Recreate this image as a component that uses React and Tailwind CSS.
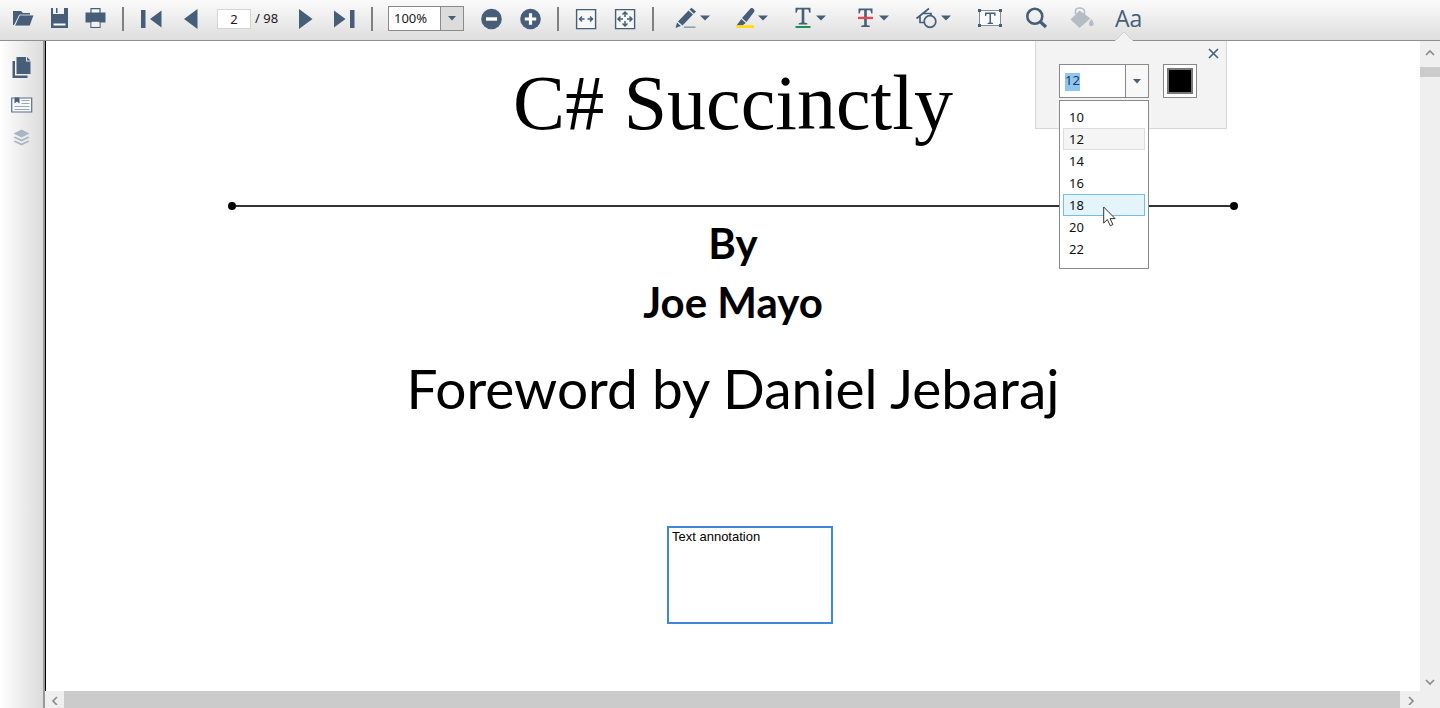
import React, { useState } from "react";

const INK = "#465e78";

function Icon({ w = 24, h = 24, children }) {
  return (
    <svg width={w} height={h} viewBox={`0 0 ${w} ${h}`} fill={INK} aria-hidden="true" className="block shrink-0">
      {children}
    </svg>
  );
}

function ToolButton({ label, children, disabled }) {
  return (
    <button type="button" aria-label={label} disabled={disabled} className="flex h-6 shrink-0 items-center">
      {children}
    </button>
  );
}

function DropButton({ label, children }) {
  return (
    <button type="button" aria-label={label} className="flex h-6 w-9 shrink-0 items-center justify-between">
      <Icon>{children}</Icon>
      <Icon w={10} h={6}>
        <path d="M0 .5h10L5 5.5z" />
      </Icon>
    </button>
  );
}

function Separator() {
  return <div className="h-6 w-0.5 shrink-0 bg-[#808080]" />;
}

const SIZES = [10, 12, 14, 16, 18, 20, 22];

function FontPanel() {
  const [size, setSize] = useState("12");
  return (
    <section
      aria-label="Text properties"
      className="absolute -left-20 top-[35px] z-20 h-[88px] w-48 border border-t-0 border-[#d6d6d6] bg-[#f3f3f3]"
    >
      <svg width="20" height="11" viewBox="0 0 20 11" className="absolute -top-2.5 left-[78px]" aria-hidden="true">
        <path d="M0 11 10 1l10 10z" fill="#f3f3f3" />
        <path d="M1 10 10 1l9 9" fill="none" stroke="#d0d0d0" />
      </svg>
      <div className="flex justify-end px-[7px] pt-[7px]">
        <button type="button" aria-label="Close" className="block">
          <svg width="11" height="11" viewBox="0 0 11 11" stroke={INK} strokeWidth="1.6" fill="none">
            <path d="M1 1l9 9M10 1l-9 9" />
          </svg>
        </button>
      </div>
      <div className="mt-[5px] flex items-start gap-3.5 pl-[23px]">
        <div className="relative w-[90px]">
          <div className="flex h-[34px] border border-[#8a8a8a] bg-white">
            <div className="relative flex min-w-0 flex-1 items-center pl-[5px]">
              <span className="absolute left-[5px] top-2 h-[18px] w-[15px] bg-[#8fc5f0]" />
              <input
                aria-label="Font size"
                value={size}
                onChange={(e) => setSize(e.target.value)}
                className="relative w-full bg-transparent font-['Noto_Sans',sans-serif] text-[13px] text-[#1c3a5a] outline-none"
              />
            </div>
            <button
              type="button"
              aria-label="Show sizes"
              className="flex w-[23px] items-center justify-center border-l border-[#8a8a8a] bg-[#f8f8f8]"
            >
              <Icon w={8} h={5}>
                <path d="M0 0h8L4 4.5z" />
              </Icon>
            </button>
          </div>
          <ul
            role="listbox"
            aria-label="Font sizes"
            className="absolute left-0 top-9 w-full border border-[#8a8a8a] bg-white px-[3px] pb-2 pt-[5px]"
          >
            {SIZES.map((n) => (
              <li
                key={n}
                role="option"
                aria-selected={n === 12}
                className={
                  "flex h-[22px] items-center border pl-[5px] font-['Noto_Sans',sans-serif] text-[13px] leading-5 text-[#111] " +
                  (n === 12
                    ? "border-[#dcdcdc] bg-[#f5f5f5]"
                    : n === 18
                      ? "border-[#70c0e7] bg-[#e5f3fb]"
                      : "border-transparent")
                }
              >
                {n}
              </li>
            ))}
          </ul>
          <svg width="13" height="21" viewBox="0 0 13 21" className="absolute left-11 top-[142px]" aria-hidden="true">
            <path d="M.7 1v16l3.7-3.4 2.9 6.2 2.6-1.2-2.8-6h5z" fill="#fff" stroke="#333" />
          </svg>
        </div>
        <button type="button" aria-label="Text color" className="h-[34px] w-[34px] border border-[#8a8a8a] bg-white p-[3px]">
          <span className="block h-full w-full border-2 border-[#777] bg-black" />
        </button>
      </div>
    </section>
  );
}

function Toolbar() {
  return (
    <header
      role="toolbar"
      className="relative z-10 flex h-[41px] shrink-0 items-start border-b border-[#8f8f8f] bg-linear-to-b from-[#fbfbfb] to-[#dedede] pl-[11px] pt-1.5"
    >
      <div className="flex shrink-0 items-center gap-3">
        <ToolButton label="Open">
          <Icon>
            <path d="M2 19V5h8l2 2h7v3H8L3 19z" />
            <path d="M8.5 9H23l-4 11H3.500z" stroke="#f5f5f5" strokeWidth=".8" />
          </Icon>
        </ToolButton>
        <ToolButton label="Save">
          <Icon>
            <path d="M4 2h2v6h11V2h4v20H4z" />
            <path d="M9 2h1.500v5H9z" />
            <path d="M6.500 17.500h12v2h-12z" fill="#fff" />
          </Icon>
        </ToolButton>
        <ToolButton label="Print">
          <Icon>
            <path d="M8 2.600h9v5H8zM8 16h9v5.400H8z" fill="#f8f8f8" stroke={INK} strokeWidth="1.200" />
            <path d="M2.500 6.500h20v10h-20z" />
            <path d="M8.600 15.800h7.800v5H8.600z" fill="#f2f2f2" />
          </Icon>
        </ToolButton>
      </div>
      <div className="ml-[15px] flex shrink-0 items-center gap-[15px]">
        <Separator />
        <ToolButton label="First page">
          <Icon>
            <path d="M2 3h4.500v18H2zM22.500 3.500v17L11 12z" />
          </Icon>
        </ToolButton>
        <ToolButton label="Previous page">
          <Icon>
            <path d="M19.500 2v20L6 12z" />
          </Icon>
        </ToolButton>
        <div className="flex items-center gap-1 font-['Noto_Sans',sans-serif] text-[13px] text-[#1a1a1a]">
          <input
            aria-label="Page number"
            defaultValue="2"
            className="h-5 w-[34px] border border-[#d4d4d4] bg-white text-center outline-none"
          />
          <span className="w-[23px] whitespace-nowrap">/ 98</span>
        </div>
        <ToolButton label="Next page">
          <Icon>
            <path d="M6 2v20l13.500-10z" />
          </Icon>
        </ToolButton>
        <ToolButton label="Last page">
          <Icon>
            <path d="M2 3.500v17L13.500 12zM18 3h4.500v18H18z" />
          </Icon>
        </ToolButton>
        <Separator />
        <div className="flex h-[25px] w-[76px] border border-[#8a8a8a] bg-white">
          <input
            aria-label="Zoom"
            defaultValue="100%"
            className="min-w-0 flex-1 bg-white pl-[5px] font-['Noto_Sans',sans-serif] text-[13px] text-[#1a1a1a] outline-none"
          />
          <button
            type="button"
            aria-label="Zoom levels"
            className="flex w-[23px] items-center justify-center border-l border-[#8a8a8a] bg-[#dcdcdc]"
          >
            <Icon w={8} h={5}>
              <path d="M0 0h8L4 4.500z" />
            </Icon>
          </button>
        </div>
        <ToolButton label="Zoom out">
          <Icon>
            <circle cx="12.500" cy="12" r="10.300" />
            <path d="M7 10.300h11v3.400H7z" fill="#fff" />
          </Icon>
        </ToolButton>
        <ToolButton label="Zoom in">
          <Icon>
            <circle cx="12.500" cy="12" r="10.300" />
            <path d="M6.800 10.400h4.100V6.300h3.200v4.100h4.100v3.200h-4.100v4.100h-3.200v-4.100H6.800z" fill="#fff" />
          </Icon>
        </ToolButton>
        <Separator />
        <ToolButton label="Fit width">
          <Icon>
            <path d="M2.600 2.600h19v19h-19z" fill="#f7f7f7" stroke={INK} strokeWidth="1.400" />
            <path d="M10.500 12H5.500M8 9.500 5.500 12 8 14.500M13.500 12h5M16 9.500l2.500 2.500-2.500 2.500" fill="none" stroke={INK} strokeWidth="1.500" />
          </Icon>
        </ToolButton>
        <ToolButton label="Fit page">
          <Icon>
            <path d="M2.600 2.600h19v19h-19z" fill="#f7f7f7" stroke={INK} strokeWidth="1.400" />
            <path
              d="M10 12H5M7.500 9.500 5 12l2.500 2.500M14 12h5M16.500 9.500 19 12l-2.500 2.500M12 10V5M9.500 7.500 12 5l2.500 2.500M12 14v5M9.500 16.500 12 19l2.500-2.500"
              fill="none"
              stroke={INK}
              strokeWidth="1.500"
            />
          </Icon>
        </ToolButton>
        <Separator />
      </div>
      <div className="ml-5 flex shrink-0 items-center gap-[22px]">
        <DropButton label="Ink">
          <path d="M14.500 4.500 19 8.500 8.500 19.500l-4.500-4zM15.500 3.500l2-1.700L22 5.500 19.800 7.700zM3 16.500l3.800 3.500L1.500 22z" />
          <path d="M10 20.500h11.500v1.400H10z" fill="#8496aa" />
        </DropButton>
        <DropButton label="Highlight">
          <path d="M18.500 2.500c1.500-1.500 5 1.300 3.700 3.300L14.500 16 10 12zM9.300 13l4.500 4-3.500 2.500H4.500z" />
          <path d="M4.500 19.200H22v2.800H4.500z" fill="#ffdc14" />
        </DropButton>
        <DropButton label="Underline">
          <path d="M5.500 1.800h15v5h-1.200l-1-3.300h-4v13l3 .7v1.200h-8.600v-1.200l3-.7v-13h-4l-1 3.300H5.500z" />
          <path d="M5.500 20h15v2h-15z" fill="#1d9150" />
        </DropButton>
      </div>
      <div className="ml-[27px] flex shrink-0 items-center gap-[26px]">
        <DropButton label="Strikethrough">
          <path d="M5.500 2.500h14v5h-1.200l-1-3.300h-3.500V19l3 .8V21H8.200v-1.200l3-.8V4.200H7.700l-1 3.300H5.500z" />
          <path d="M5 10.800h15v2.300H5z" fill="#ec4350" />
        </DropButton>
        <DropButton label="Shapes">
          <circle cx="15" cy="15.500" r="5.800" fill="none" stroke={INK} strokeWidth="1.700" />
          <path d="M1.500 12.500 14 2.500M5 10.500v6h4M8 7.500h8v2.500" fill="none" stroke={INK} strokeWidth="1.700" />
        </DropButton>
        <ToolButton label="Text box">
          <Icon w={26}>
            <path d="M2.500 4.500h21v15h-21z" fill="#fafafa" stroke="#7c8da0" />
            <path d="M1 3h3v3H1zM22 3h3v3h-3zM1 18h3v3H1zM22 18h3v3h-3z" />
            <path d="M8 6.500h10.500V10h-1l-.7-2H14v8.500l2 .5v1h-5.500v-1l2-.5V8H9.700L9 10H8z" />
          </Icon>
        </ToolButton>
      </div>
      <div className="ml-[22px] flex shrink-0 items-center gap-[21px]">
        <ToolButton label="Search">
          <Icon>
            <circle cx="9.800" cy="10.300" r="7.500" fill="none" stroke={INK} strokeWidth="2.600" />
            <path d="m15 15.500 6 5.500" stroke={INK} strokeWidth="3.200" />
          </Icon>
        </ToolButton>
        <ToolButton label="Fill color" disabled>
          <Icon>
            <g fill="#b4bdc6">
              <path d="m.5 13.500 9-9 11 8-11 9.500z" />
              <path d="M5.500 8V5c0-4 8-4 9 0v5" fill="none" stroke="#b4bdc6" strokeWidth="1.500" />
              <path d="M21.500 13c-5 6.500-1.500 7 0 7s4-1 0-7z" />
            </g>
          </Icon>
        </ToolButton>
        <div className="relative h-6">
          <button
            type="button"
            aria-label="Font size and color"
            className="block h-6 font-['Open_Sans',sans-serif] text-[23px] leading-6 text-[#465e78]"
          >
            Aa
          </button>
          <FontPanel />
        </div>
      </div>
    </header>
  );
}

function Sidebar() {
  return (
    <nav
      aria-label="Panels"
      className="flex w-[45px] shrink-0 flex-col items-center border-r-2 border-[#999] bg-linear-to-r from-white to-[#dcdcdc] pt-3.5"
    >
      <button type="button" aria-label="Thumbnails" className="h-6">
        <Icon>
          <path d="M2.500 6H5v14.500h12.500V23h-15z" />
          <path d="M6.500 2H16v4.500h4.500V19h-14zM17 2l3.500 3.500H17z" />
        </Icon>
      </button>
      <button type="button" aria-label="Bookmarks" className="mt-3.5 h-6">
        <Icon>
          <path d="M1.700 5h20v14h-20z" fill="#f7f7f7" stroke="#5b7088" strokeWidth="1.200" />
          <path d="M4.500 4.500h5v6L7 8.500l-2.500 2z" />
          <path d="M11.500 7.500h8M11.500 10.500h8M4.500 13.500h15M4.500 16.500h15" fill="none" stroke="#9aa7b5" />
        </Icon>
      </button>
      <button type="button" aria-label="Layers" disabled className="mt-2 h-6">
        <Icon>
          <g fill="#aab5c1">
            <path d="m11.500 4.500 8 4-8 4-8-4z" />
            <path d="m3.500 12.500 1.500-1 6.500 3 6.500-3 1.500 1-8 4zM3.500 16.500l1.500-1 6.500 3 6.500-3 1.500 1-8 4z" />
          </g>
        </Icon>
      </button>
    </nav>
  );
}

function Chevron({ d }) {
  return (
    <svg width="10" height="10" viewBox="0 0 10 10" fill="none" stroke="#8c8c8c" strokeWidth="1.700" aria-hidden="true">
      <path d={d} />
    </svg>
  );
}

function DocumentPage() {
  return (
    <main className="relative min-w-0 flex-1 overflow-hidden border-l border-black bg-white text-center text-black">
      <h1 className="mt-[18px] font-['Liberation_Serif',serif] text-[78px] leading-[88px]">C# Succinctly</h1>
      <div className="mx-auto mt-[55px] flex w-full max-w-[1010px] items-center">
        <span className="h-2 w-2 rounded-full bg-black" />
        <span className="h-0.5 flex-1 bg-[#333]" />
        <span className="h-2 w-2 rounded-full bg-black" />
      </div>
      <p className="mt-1 font-['Lato',sans-serif] text-[42px] font-bold leading-[59px]">By</p>
      <p className="font-['Lato',sans-serif] text-[42px] font-bold leading-[59px]">Joe Mayo</p>
      <p className="mt-5 font-['Lato',sans-serif] text-[55px] leading-[72px]">Foreword by Daniel Jebaraj</p>
      <textarea
        aria-label="Text annotation"
        defaultValue="Text annotation"
        className="absolute left-[621px] top-[485px] h-[98px] w-[166px] resize-none border-2 border-[#3f86dc] bg-white px-[3px] font-['Liberation_Sans',sans-serif] text-[13px] leading-[18px] text-black outline-none"
      />
    </main>
  );
}

export default function App() {
  return (
    <div className="flex h-screen flex-col overflow-hidden bg-white">
      <Toolbar />
      <div className="flex min-h-0 flex-1">
        <Sidebar />
        <div className="flex min-w-0 flex-1 flex-col">
          <div className="flex min-h-0 flex-1">
            <DocumentPage />
            <div className="flex w-5 shrink-0 flex-col items-center bg-[#efefef]">
              <div className="flex h-[26px] items-center">
                <Chevron d="M1 6l4-4 4 4" />
              </div>
              <div className="h-2.5 w-full bg-[#cbcbcb]" />
              <div className="flex-1" />
              <div className="flex h-[18px] items-center">
                <Chevron d="M1 3l4 4 4-4" />
              </div>
            </div>
          </div>
          <div className="flex h-[17px] shrink-0 items-center bg-[#efefef]">
            <div className="flex w-[19px] justify-center">
              <Chevron d="M7 2L3 6l4 4" />
            </div>
            <div className="h-full flex-1 bg-[#cbcbcb]" />
            <div className="flex w-10 pl-1.5">
              <Chevron d="M3 2l4 4-4 4" />
            </div>
          </div>
        </div>
      </div>
    </div>
  );
}
